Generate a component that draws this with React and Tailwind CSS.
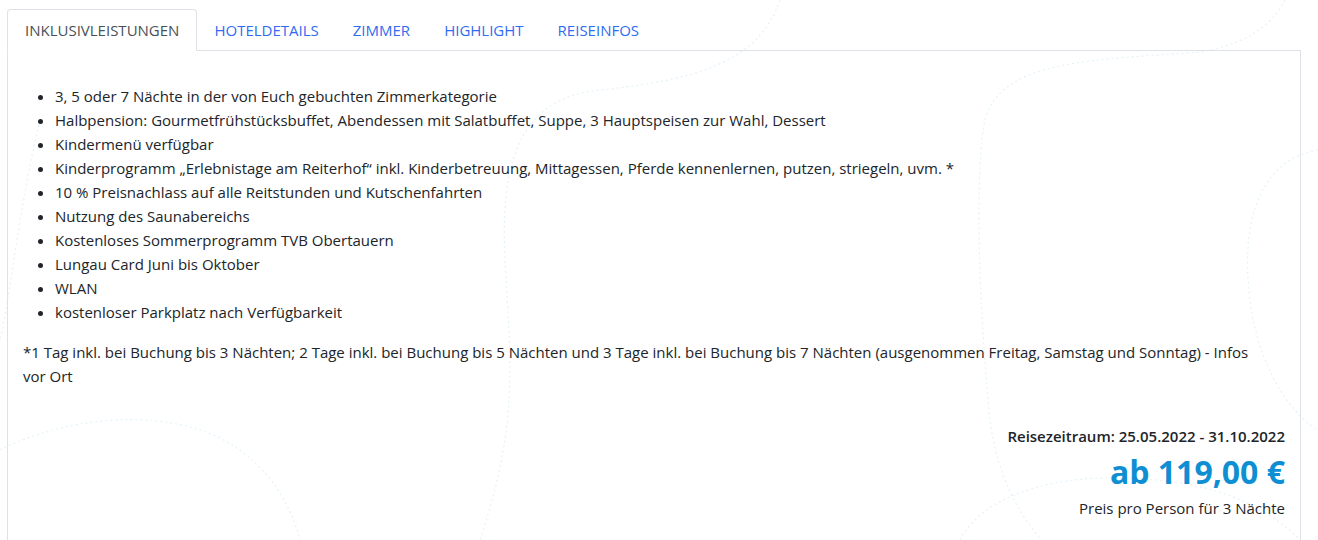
import React from "react";

const tabs = ["INKLUSIVLEISTUNGEN", "HOTELDETAILS", "ZIMMER", "HIGHLIGHT", "REISEINFOS"];

const items = [
  "3, 5 oder 7 Nächte in der von Euch gebuchten Zimmerkategorie",
  "Halbpension: Gourmetfrühstücksbuffet, Abendessen mit Salatbuffet, Suppe, 3 Hauptspeisen zur Wahl, Dessert",
  "Kindermenü verfügbar",
  "Kinderprogramm „Erlebnistage am Reiterhof“ inkl. Kinderbetreuung, Mittagessen, Pferde kennenlernen, putzen, striegeln, uvm. *",
  "10 % Preisnachlass auf alle Reitstunden und Kutschenfahrten",
  "Nutzung des Saunabereichs",
  "Kostenloses Sommerprogramm TVB Obertauern",
  "Lungau Card Juni bis Oktober",
  "WLAN",
  "kostenloser Parkplatz nach Verfügbarkeit",
];

// dezente Hintergrundkurven
const Waves = () => (
  <svg className="absolute inset-0 w-full h-full pointer-events-none" viewBox="0 0 1318 540" preserveAspectRatio="none">
    <g fill="none" stroke="#e4f2f9" strokeWidth="1.2" strokeDasharray="2 3">
      <path d="M1285 0 C1270 30 1240 45 1200 52 C1100 60 1000 58 985 120 C975 170 978 300 990 420 C1000 500 1040 540 1060 560" />
      <path d="M780 0 C760 60 700 80 600 90 C520 98 500 160 505 260 C510 360 520 420 480 540" />
      <path d="M0 450 C60 420 140 410 200 430 C260 450 290 500 300 540" />
      <path d="M1318 150 C1260 160 1240 220 1250 300 C1260 380 1300 420 1318 430" />
      <path d="M960 540 C980 500 1040 480 1100 478 C1200 476 1260 500 1300 540" />
      <path d="M40 120 C20 200 10 300 0 340" />
    </g>
  </svg>
);

export default function App() {
  return (
    <div
      className="relative w-[1318px] h-[540px] overflow-hidden bg-white text-[#212529]"
      style={{ fontFamily: "'Open Sans', 'Noto Sans', sans-serif" }}
    >
      <Waves />
      <div className="relative pt-[9px] pl-[7px] pr-[17px]">
        <ul className="flex border-b border-[#dee2e6]">
          {tabs.map((t, i) => (
            <li key={t} className="-mb-px">
              <div
                className={
                  i === 0
                    ? "h-[42px] px-[17px] flex items-center text-[15px] text-[#495057] bg-white border border-[#dee2e6] border-b-white rounded-t-[4px]"
                    : "h-[42px] px-4 flex items-center text-[15px] text-[#2f6cf0] border border-transparent"
                }
              >
                {t}
              </div>
            </li>
          ))}
        </ul>
        <div className="border-x border-[#dee2e6] px-[15px] pt-[33px] pb-10 text-[15px] leading-6">
          <ul className="list-disc pl-8 mb-4">
            {items.map((t) => (
              <li key={t}>{t}</li>
            ))}
          </ul>
          <p className="pr-4">
            *1 Tag inkl. bei Buchung bis 3 Nächten; 2 Tage inkl. bei Buchung bis 5 Nächten und 3 Tage inkl. bei Buchung bis 7 Nächten (ausgenommen Freitag, Samstag und Sonntag) - Infos vor Ort
          </p>
          <div className="flex flex-col items-end mt-[36px]">
            <div className="text-[15px] font-semibold leading-6">Reisezeitraum: 25.05.2022 - 31.10.2022</div>
            <div className="text-[32px] font-bold text-[#0f8fd3] leading-[48px]">ab 119,00 €</div>
            <div className="text-[15px] leading-6">Preis pro Person für 3 Nächte</div>
          </div>
        </div>
      </div>
    </div>
  );
}
